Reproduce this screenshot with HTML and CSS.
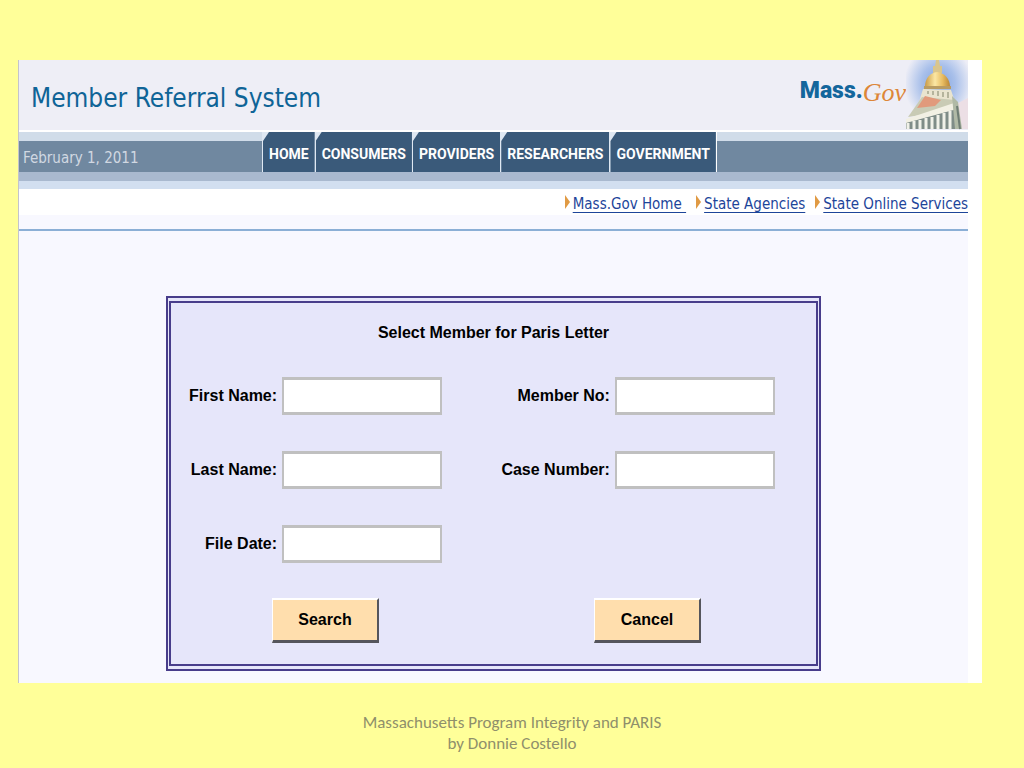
FILE: index.html
```html
<!DOCTYPE html>
<html lang="en">
<head>
  <meta charset="UTF-8">
  <meta name="viewport" content="width=device-width, initial-scale=1.0">
  <title>Member Referral System</title>
  <link rel="stylesheet" href="styles.css">
</head>
<body>
  <main class="frame">
    <div class="app">
      <!-- Header -->
      <header class="header">
        <h1>Member Referral System</h1>
        <div class="logo">
          <span class="logo-mass">Mass.</span><span class="logo-gov">Gov</span>
          <svg class="dome" width="62" height="70" viewBox="0 0 62 70" aria-hidden="true">
            <defs>
              <radialGradient id="sky" cx="0.52" cy="0.34" r="0.55">
                <stop offset="0" stop-color="#7fa3e0"/>
                <stop offset="0.5" stop-color="#a9c0ea"/>
                <stop offset="1" stop-color="#eeeef6"/>
              </radialGradient>
              <linearGradient id="gold" x1="0" x2="1" y1="0" y2="0">
                <stop offset="0" stop-color="#c99a45"/>
                <stop offset="0.4" stop-color="#fbe7a4"/>
                <stop offset="0.7" stop-color="#e8bd62"/>
                <stop offset="1" stop-color="#b98534"/>
              </linearGradient>
            </defs>
            <rect width="62" height="70" fill="url(#sky)"/>
            <path d="M50 44l12-6v31H52z" fill="#ecdfe5"/>
            <path d="M30 0h3l1 6h2v7h-9V6h2z" fill="#d9c58c"/>
            <path d="M19 27C19 18 24 13 31 12c8 1 13 7 13 15z" fill="url(#gold)"/>
            <path d="M18 26h27v3H18z" fill="#b99c62"/>
            <path d="M17 29l28 1 5 15-37-3z" fill="#e9e4cf"/>
            <path d="M2 57L16 37l33 3 4 9z" fill="#c9cbb5"/>
            <path d="M11 48l8-12 16 4-6 6z" fill="#e19a7c"/>
            <path d="M0 59l51-17v8L0 64z" fill="#f2f0e4"/>
            <path d="M0 63l51-14 4 20H0z" fill="#7f8c88"/>
            <path d="M2 63v6M8 61v8M14 60v9M20 58v11M26 57v12M32 55v14M38 53v16M44 51v18" stroke="#f1f1e9" stroke-width="3"/>
            <path d="M46 36l6 6 4 27h-7z" fill="#b0b9a6"/>
            <path d="M51 46l3 23" stroke="#6f7d75" stroke-width="2"/>
            <path d="M22 31v3M27 31v4M32 31v5M37 32v5M42 32v6" stroke="#b5b49c" stroke-width="2"/>
          </svg>
        </div>
      </header>

      <!-- Date and tabs -->
      <div class="navbar">
        <span class="date">February 1, 2011</span>
        <nav class="tabs">
          <a href="#"><span>HOME</span></a>
          <a href="#"><span>CONSUMERS</span></a>
          <a href="#"><span>PROVIDERS</span></a>
          <a href="#"><span>RESEARCHERS</span></a>
          <a href="#"><span>GOVERNMENT</span></a>
        </nav>
      </div>

      <nav class="links">
        <a href="#">Mass.Gov Home&nbsp;</a>
        <a href="#">State Agencies</a>
        <a href="#">State Online Services</a>
      </nav>

      <!-- Search form -->
      <div class="content">
        <form class="search">
          <h2>Select Member for Paris Letter</h2>
          <div class="fields">
            <label for="first">First Name:</label>
            <input type="text" id="first" name="first">
            <label for="member">Member No:</label>
            <input type="text" id="member" name="member">

            <label for="last">Last Name:</label>
            <input type="text" id="last" name="last">
            <label for="case">Case Number:</label>
            <input type="text" id="case" name="case">

            <label for="filedate">File Date:</label>
            <input type="text" id="filedate" name="filedate">
          </div>
          <div class="buttons">
            <button type="submit">Search</button>
            <button type="reset">Cancel</button>
          </div>
        </form>
      </div>
    </div>
  </main>

  <footer class="footer">
    Massachusetts Program Integrity and PARIS<br>
    by Donnie Costello
  </footer>
</body>
</html>
```

FILE: styles.css
```css
/* General Styles */
* {
  box-sizing: border-box;
}

body {
  margin: 0;
  padding: 60px 42px 0 18px;
  background-color: #ffff99;
  font-family: "DejaVu Sans Condensed", Tahoma, sans-serif;
}

.frame {
  padding-right: 14px;
  background: #fff;
}

.app {
  border-left: 1px solid #c4c4cc;
  background: #f8f8ff;
}

/* Header */
.header {
  display: flex;
  justify-content: space-between;
  align-items: center;
  height: 72px;
  padding-left: 12px;
  background: #eeeef6;
  border-bottom: 2px solid #fff;
}

h1 {
  margin: 0;
  padding-top: 6px;
  color: #0f6497;
  font-size: 26px;
  font-weight: normal;
  line-height: 40px;
}

.logo {
  display: flex;
  align-items: center;
}

.logo-mass {
  padding-bottom: 10px;
  color: #13669c;
  font-family: Roboto, Arial, sans-serif;
  font-size: 23px;
  font-weight: 900;
}

.logo-gov {
  padding-bottom: 4px;
  color: #dd8638;
  font-family: "Liberation Serif", serif;
  font-size: 26px;
  font-style: italic;
}

.dome {
  display: block;
}

/* Date and tabs */
.navbar {
  display: flex;
  height: 57px;
  background: linear-gradient(#d0dce9 9px, #7088a0 9px, #7088a0 40px, #a9b9cf 40px, #a9b9cf 49px, #d2dff0 49px);
}

.date {
  width: 243px;
  padding: 14px 4px 0;
  color: #d0d8e2;
  font-size: 15px;
  line-height: 24px;
}

.tabs {
  display: flex;
  height: 40px;
  border-right: 1px solid #fff;
}

.tabs a {
  padding-left: 1px;
  background: #dfe8f2;
  color: #fff;
  font-family: Roboto, Arial, sans-serif;
  font-size: 14px;
  font-weight: bold;
  line-height: 44px;
  text-decoration: none;
}

.tabs span {
  display: block;
  height: 40px;
  padding: 0 6px;
  background: #3a5a7a;
  clip-path: polygon(6px 0, 100% 0, 100% 100%, 0 100%, 0 9px);
}

.links {
  display: flex;
  justify-content: flex-end;
  gap: 10px;
  height: 42px;
  padding-top: 4px;
  background: linear-gradient(#fff 26px, #f8f8ff 26px);
  border-bottom: 2px solid #8bafd6;
  font-size: 15px;
  line-height: 22px;
}

.links a {
  color: #1d459a;
  text-underline-offset: 3px;
}

.links a::before {
  content: "";
  display: inline-block;
  margin-right: 3px;
  border: solid transparent;
  border-width: 7px 0 7px 5px;
  border-left-color: #e09a44;
}

/* Search form */
.content {
  padding: 65px 0 12px;
}

.search {
  width: 69%;
  margin: 0 auto;
  padding: 14px 0 21px;
  background: #e6e6fa;
  border: double #483d8b;
  border-width: 7px 5px;
  font-family: "Liberation Sans", Arial, sans-serif;
  font-size: 16px;
  font-weight: bold;
}

h2 {
  margin: 0 0 28px;
  font-size: 16px;
  line-height: 32px;
  text-align: center;
}

.fields {
  display: grid;
  grid-template-columns: 106px 160px 1fr 160px;
  gap: 36px 5px;
  align-items: center;
  padding-right: 41px;
}

.fields label {
  text-align: right;
  white-space: nowrap;
}

.fields input {
  width: 100%;
  height: 38px;
  padding: 2px 4px;
  background: #fff;
  border: solid #c0c0c0;
  border-width: 3px 2px;
  font: inherit;
}

.buttons {
  display: flex;
  justify-content: center;
  gap: 215px;
  margin-top: 35px;
  padding-right: 14px;
}

.buttons button {
  width: 107px;
  height: 45px;
  padding: 0;
  background: #ffdead;
  border: solid;
  border-width: 2px 2px 3px 1px;
  border-color: #fff #55555c #55555c #fff;
  color: #000;
  font: inherit;
}

/* Footer */
.footer {
  padding: 29px 0 14px 24px;
  color: #8f8f6b;
  font-family: Carlito, Lato, sans-serif;
  font-size: 17px;
  line-height: 21px;
  text-align: center;
}
```
